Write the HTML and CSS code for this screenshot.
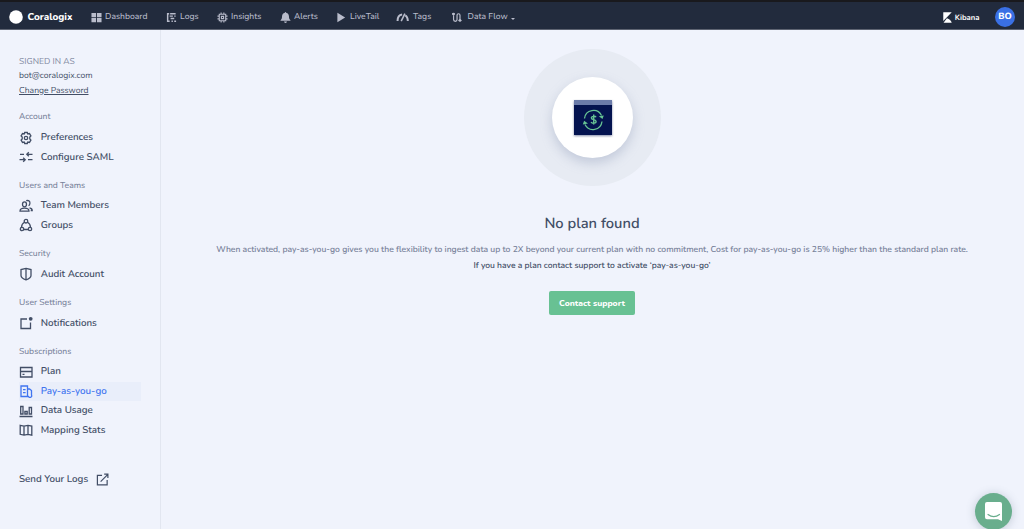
FILE: index.html
```html
<!DOCTYPE html>
<html lang="en">
<head>
<meta charset="utf-8">
<title>Coralogix</title>
<link rel="stylesheet" href="styles.css">
</head>
<body>
<header class="topbar">
  <a class="brand"><svg class="brand-mark" viewBox="0 0 14 14"><circle cx="7" cy="7" r="6.800" fill="#fff"/></svg><span>Coralogix</span></a>
  <nav class="nav">
    <a class="nav-item n1"><svg viewBox="0 0 12 12"><path fill="currentColor" d="M.5 1h5v4.600h-5zM6.500 1h5v4.600h-5zM.5 6.500h5v4.600h-5zM6.500 6.500h5v4.600h-5z"/></svg><span>Dashboard</span></a>
    <a class="nav-item n2"><svg viewBox="0 0 12 12"><path fill="none" stroke="currentColor" stroke-width="1.600" d="M1 1.800h2.500M4.500 1.800h6M1 4.500h1.500M4 4.500h3.500M9 4.500h1.500M1 7.200h1.500M5 7.200h4M1 10h3M6 10h1.500M9 10h2M1.800 1v9"/></svg><span>Logs</span></a>
    <a class="nav-item n3"><svg viewBox="0 0 12 12"><path fill="none" stroke="currentColor" stroke-width="1.200" d="M2.500 2.500h7v7h-7zM4.800 4.800h2.400v2.400H4.800zM4.500 .5v2M7.500 .5v2M4.500 9.500v2M7.500 9.500v2M.5 4.500h2M.5 7.500h2M9.500 4.500h2M9.500 7.500h2"/></svg><span>Insights</span></a>
    <a class="nav-item n4"><svg viewBox="0 0 12 12"><path fill="currentColor" d="M5.300 .8a.7.7 0 0 1 1.400 0C8.700 1.200 9.800 2.900 9.800 4.900c0 2.300.5 3.100 1.600 4v.7H.6v-.7c1.100-.9 1.600-1.700 1.600-4 0-2 1.100-3.700 3.100-4.100zM4.400 10.300h3.200a1.600 1.600 0 0 1-3.200 0z"/></svg><span>Alerts</span></a>
    <a class="nav-item n5"><svg viewBox="0 0 12 12"><path fill="currentColor" d="M1.500 .8l8.500 5.200-8.500 5.200z"/></svg><span>LiveTail</span></a>
    <a class="nav-item n6"><svg class="wide" viewBox="0 0 14 12"><path fill="none" stroke="currentColor" stroke-width="2.200" d="M1.600 9.800C1.600 5.500 3 3 6.600 2.600M10 3.600c1.800.9 2.700 3 2.800 6.200"/><path fill="none" stroke="currentColor" stroke-width="1.700" d="M5.600 10L9.600 1.800"/></svg><span>Tags</span></a>
    <a class="nav-item n7"><svg viewBox="0 0 12 12"><path fill="none" stroke="currentColor" stroke-width="1.300" d="M2.800 3.500v4.800a1.900 1.900 0 0 0 3.800 0V3.500a1.600 1.600 0 0 1 3.200 0v4.700M1.200 2h3M8.200 9.300h3.200"/><circle cx="2.700" cy="2.200" r="1.500" fill="currentColor"/><circle cx="9.800" cy="9.200" r="1.500" fill="currentColor"/></svg><span>Data Flow</span><i class="caret"></i></a>
  </nav>
  <a class="kibana"><svg viewBox="0 0 10 12"><path fill="#fff" d="M.3.300h9.400L.3 10zM.6 11.700l3.800-4.900c2.800.7 4.700 2.500 5.300 4.900z"/></svg><span>Kibana</span></a>
  <div class="avatar">BO</div>
</header>
<div class="layout">
  <aside class="sidebar">
    <div class="account">
      <div class="muted">SIGNED IN AS</div>
      <div>bot@coralogix.com</div>
      <div><a class="link">Change Password</a></div>
    </div>
    <h3>Account</h3>
    <a class="item"><svg viewBox="0 0 14 14"><path d="M5.700 1.500h2.600l.5 1.500 1.700-.4 1.400 2.300L10.800 6v2l1.100 1.100-1.400 2.300-1.700-.4-.5 1.500H5.700L5.200 11l-1.700.4-1.400-2.300L3.200 8V6L2.100 4.900l1.400-2.300 1.700.4z"/><circle cx="7" cy="7" r="1.700"/></svg><span>Preferences</span></a>
    <a class="item"><svg viewBox="0 0 14 14"><path d="M7.500 4.300h6M9.800 2.300l-2 2 2 2M1 4.300h4M.5 9.700h6M4.200 7.700l2 2-2 2M9 9.700h4.500"/></svg><span>Configure SAML</span></a>
    <h3>Users and Teams</h3>
    <a class="item"><svg viewBox="0 0 14 14"><ellipse cx="5.500" cy="5.300" rx="2" ry="2.500"/><path d="M1 12.200c0-2 1.800-3 4.500-3s4.500 1 4.500 3zM7.200 1.700c2.600-.7 4 .7 3.700 2.800-.1 1-.5 1.800-1.300 2.300M10.500 8.800c1.800.3 2.700 1.200 2.700 2.700h-1.500"/></svg><span>Team Members</span></a>
    <a class="item"><svg viewBox="0 0 14 14"><circle cx="7" cy="3.200" r="1.800"/><circle cx="3" cy="11" r="1.700"/><circle cx="11" cy="11" r="1.700"/><path d="M5.500 4.300C3.600 5.400 2.600 7 2.500 9.300M8.500 4.300c1.900 1.100 2.900 2.700 3 5M4.700 11.500h4.600"/></svg><span>Groups</span></a>
    <h3>Security</h3>
    <a class="item"><svg viewBox="0 0 14 14"><path d="M7 1.300l5 1.200v6c0 2.300-2 3.400-5 4.300-3-.9-5-2-5-4.300v-6zM7 1.300v11.500"/></svg><span>Audit Account</span></a>
    <h3>User Settings</h3>
    <a class="item"><svg viewBox="0 0 14 14"><path d="M8 3H2v9.500h9.500V6.500"/><circle class="solid" cx="11.700" cy="2.800" r="1.900"/></svg><span>Notifications</span></a>
    <h3>Subscriptions</h3>
    <a class="item"><svg viewBox="0 0 14 14"><path d="M1.500 2.500h11.500v9.500H1.500zM1.500 6.500H13M3.500 9.300h2"/></svg><span>Plan</span></a>
    <a class="item active"><svg viewBox="0 0 14 14"><path d="M2 2h6.500v10.500H2zM8.500 5h2l2 1.500v4.500a1.500 1.500 0 0 1-3 1.500h-2M4 5.700h2.600M4 8.700h2.600"/></svg><span>Pay-as-you-go</span></a>
    <a class="item"><svg viewBox="0 0 14 14"><path d="M.5 12.500h13M1.700 2.500h2.300v7.500H1.700zM5.900 7.500h2.300v2.500H5.900zM10.200 3.500h2.300v6.500h-2.300z"/></svg><span>Data Usage</span></a>
    <a class="item"><svg viewBox="0 0 14 14"><path d="M1.200 2.300l3.800.8 4-.8 3.800.8v9l-3.800-.8-4 .8-3.800-.8zM5 3.100v9M9 2.300v9"/></svg><span>Mapping Stats</span></a>
    <a class="send"><span>Send Your Logs</span><svg viewBox="0 0 14 14"><path d="M6.500 2.500h-5v10.300H12V7.500M5 9.300l7.500-7.500M8.800 1.300h4v4"/></svg></a>
  </aside>
  <main class="main">
    <div class="halo"><div class="disc">
      <svg viewBox="0 0 38 35"><path fill="#04134f" d="M0 0h38v35H0z"/><path fill="#6b7ba9" d="M0 0h38v5H0z"/><g fill="none" stroke="#66c293" stroke-width="1.300"><path d="M10.500 18.500a9 9 0 0 1 17-3M28 21.500a9 9 0 0 1-17 3"/><path stroke-width="1.400" d="M22 17.300c-.5-1.300-4.600-1.500-4.600.6 0 2.200 4.700 1.400 4.700 3.700 0 2.100-4.300 2-5 .3M19.700 14.600v9.800"/></g><path fill="#66c293" d="M24.800 16.300l5-.9-1.300 3.600zM8.800 24.600l1.300-3.900 3.900 2.700z"/></svg>
    </div></div>
    <h1>No plan found</h1>
    <p class="description">When activated, pay-as-you-go gives you the flexibility to ingest data up to 2X beyond your current plan with no commitment, Cost for pay-as-you-go is 25% higher than the standard plan rate.</p>
    <p class="hint">If you have a plan contact support to activate ‘pay-as-you-go’</p>
    <button class="cta">Contact support</button>
  </main>
</div>
<div class="chat"><svg viewBox="0 0 20 22"><path fill="#fff" d="M3 1h13a2 2 0 0 1 2 2v17l-4-1.800H3a2 2 0 0 1-2-2V3a2 2 0 0 1 2-2z"/><path fill="none" stroke="#69ae8d" stroke-width="1.200" stroke-linecap="round" d="M4 13.500c3.500 2.600 8 2.600 11.500 0"/></svg></div>
</body>
</html>
```

FILE: styles.css
```css
* { box-sizing: border-box; }
body { margin: 0; height: 529px; overflow: hidden; background: #f0f3fc; color: #424e66; font-family: Nunito, Lato, "Open Sans", sans-serif; font-size: 8.550px; text-rendering: geometricPrecision; display: flex; flex-direction: column; }
svg { display: block; flex: none; }
.topbar { height: 30px; flex: none; display: flex; align-items: center; padding: 4px 9px 1px 9px; background: #222b3d; border-top: 2px solid #19191d; border-bottom: 1px solid #5e6472; color: #b9bccb; }
.brand { display: flex; align-items: center; gap: 4.500px; width: 82px; color: #fff; font-size: 9.850px; font-weight: 800; }
.brand-mark { width: 14px; height: 14px; }
.nav { display: flex; flex: 1; font-weight: 500; }
.nav-item { display: flex; align-items: center; gap: 3px; white-space: nowrap; }
.nav-item svg { width: 11px; height: 11px; }
.nav-item .wide { width: 13px; }
.n1 { width: 75px; } .n2 { width: 51px; } .n3 { width: 63px; } .n4 { width: 56px; } .n5 { width: 60px; } .n6 { width: 54.500px; }
.n6, .n7 { gap: 4px; }
.n7 svg { margin-right: 2px; }
.caret { border: 2px solid transparent; border-top-color: currentColor; border-bottom: 0; margin: 3px 0 0 -1px; }
.kibana { display: flex; align-items: center; gap: 3px; color: #fff; font-size: 7.700px; font-weight: 700; margin-right: 15.500px; }
.kibana svg { width: 9px; height: 11px; }
.avatar { width: 20px; height: 20px; border-radius: 50%; background: #3a70e5; color: #fff; display: grid; place-items: center; font-size: 9px; font-weight: 800; }
.layout { flex: 1; display: flex; min-height: 0; }
.sidebar { width: 161px; flex: none; padding: 24.600px 19px 0 19px; border-right: 1.500px solid #e2e6f0; white-space: nowrap; }
.account { line-height: 14.650px; margin-bottom: 9.800px; }
.muted { color: #8088a0; }
.link { text-decoration: underline; }
h3 { margin: 9.770px 0 0; font-size: 8.550px; font-weight: 500; line-height: 19.530px; color: #78829a; }
.account + h3 { margin-top: 0; }
.item { display: flex; align-items: center; gap: 7.700px; height: 19.530px; font-size: 9.770px; font-weight: 600; }
.item svg { width: 14px; height: 14px; }
.sidebar svg { fill: none; stroke: currentColor; stroke-width: 1.300; }
.sidebar .solid { fill: currentColor; stroke: none; }
.active { background: #e9eefa; color: #3f74f0; }
.send { display: flex; align-items: center; gap: 8px; margin-top: 29px; height: 20px; font-size: 9.770px; font-weight: 600; }
.send svg { width: 13px; height: 13px; }
.main { flex: 1; display: flex; flex-direction: column; align-items: center; padding: 19px 1px 0 0; }
.halo { width: 137px; height: 137px; border-radius: 50%; background: #e7ebf3; display: grid; place-items: center; flex: none; }
.disc { width: 81px; height: 81px; border-radius: 50%; background: #fff; display: grid; place-items: center; padding-left: 1px; box-shadow: 0 5px 12px #8a97b466; }
.disc svg { width: 38px; height: 35px; filter: drop-shadow(0 1px 1px #04134f80); }
h1 { margin: 25.500px 0 0; font-size: 14.700px; font-weight: 600; line-height: 24px; }
p { margin: 0; line-height: 16.500px; white-space: nowrap; }
.description { margin-top: 6.200px; font-weight: 600; color: #78829a; }
.hint { font-size: 8.500px; font-weight: 650; }
.cta { margin-top: 16.300px; width: 86px; height: 24px; padding: 0; border: 0; border-radius: 2px; background: #68c193; color: #fff; font: inherit; font-weight: 800; white-space: nowrap; }
.chat { position: absolute; left: 975px; top: 493px; width: 37px; height: 37px; border-radius: 50%; background: #69ae8d; box-shadow: 0 1px 10px #5a6b8050; display: grid; place-items: center; }
.chat svg { width: 20px; height: 22px; }
```
